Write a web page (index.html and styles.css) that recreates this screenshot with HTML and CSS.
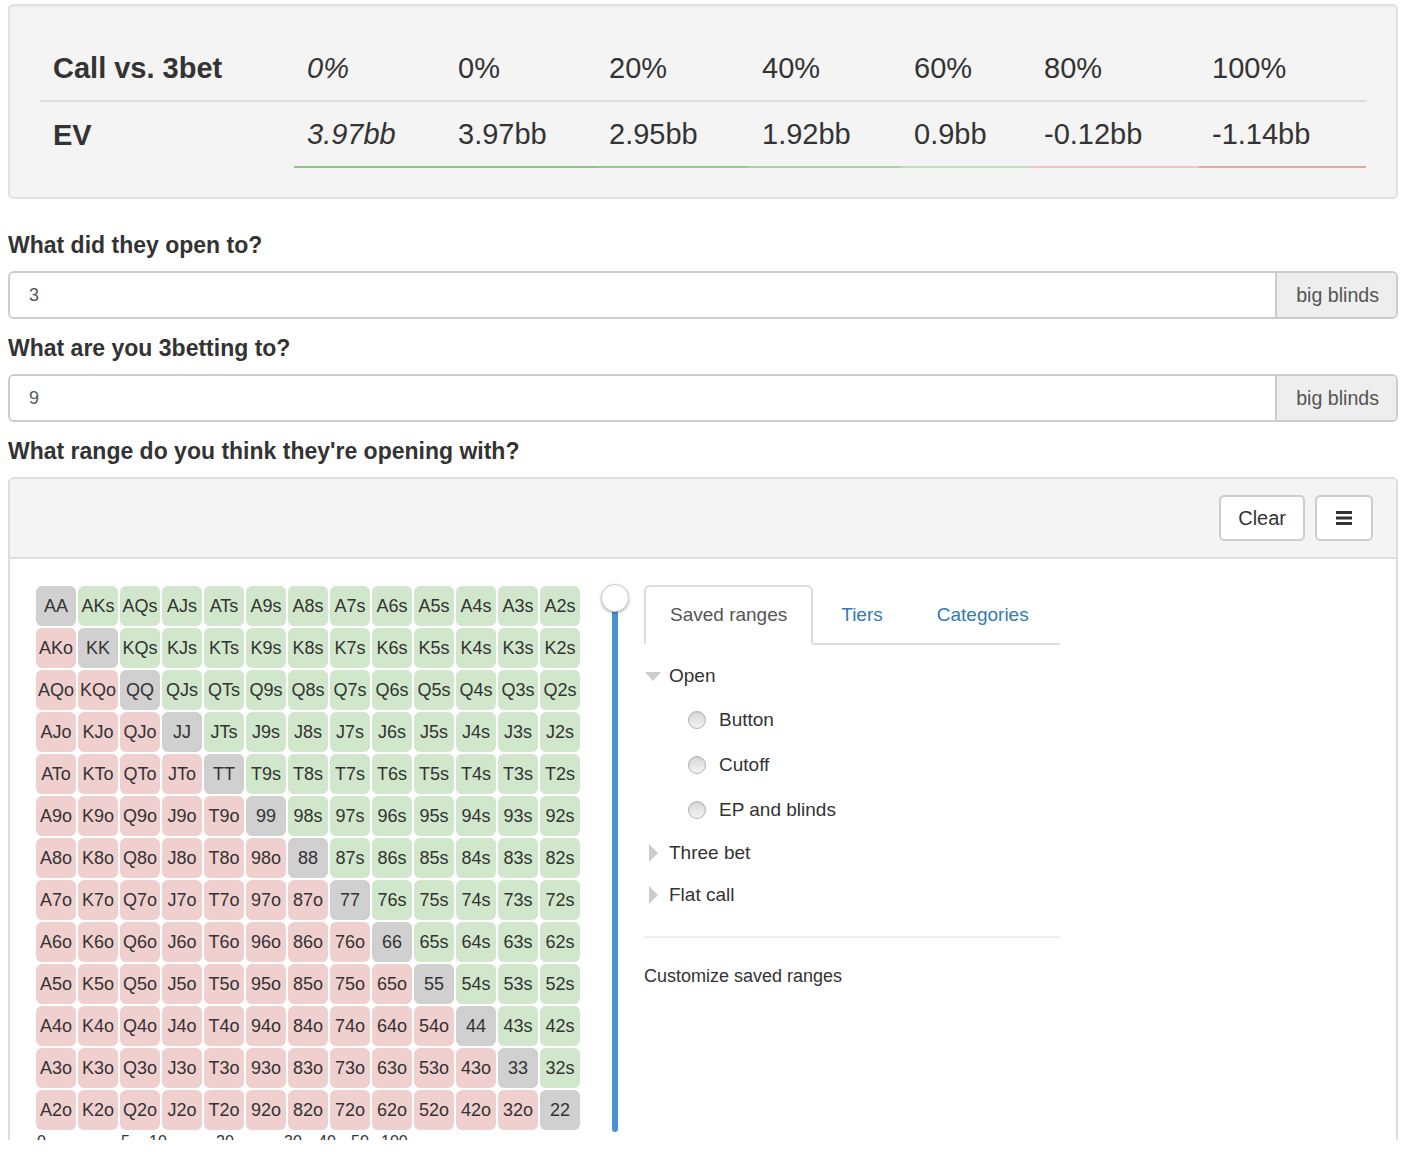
FILE: index.html
```html
<!DOCTYPE html>
<html>
<head>
<meta charset="utf-8">
<title>3bet calculator</title>
<link rel="stylesheet" href="styles.css">
</head>
<body>
<div class="page">
  <div class="well">
    <table class="ev-table">
      <colgroup>
        <col class="col-label"><col class="col-a"><col class="col-b"><col class="col-c"><col class="col-d"><col class="col-e"><col class="col-f"><col class="col-g">
      </colgroup>
      <tr class="head">
        <th>Call vs. 3bet</th>
        <td class="it">0%</td>
        <td>0%</td>
        <td>20%</td>
        <td>40%</td>
        <td>60%</td>
        <td>80%</td>
        <td>100%</td>
      </tr>
      <tr class="ev">
        <th>EV</th>
        <td class="it ev-a">3.97bb</td>
        <td class="ev-a">3.97bb</td>
        <td class="ev-b">2.95bb</td>
        <td class="ev-c">1.92bb</td>
        <td class="ev-d">0.9bb</td>
        <td class="ev-e">-0.12bb</td>
        <td class="ev-f">-1.14bb</td>
      </tr>
    </table>
  </div>

  <label class="q" for="open">What did they open to?</label>
  <div class="input-group">
    <input class="input" id="open" type="text" value="3">
    <span class="addon">big blinds</span>
  </div>

  <label class="q" for="threebet">What are you 3betting to?</label>
  <div class="input-group">
    <input class="input" id="threebet" type="text" value="9">
    <span class="addon">big blinds</span>
  </div>

  <label class="q">What range do you think they're opening with?</label>
  <div class="range-panel">
    <div class="panel-head">
      <button class="btn">Clear</button>
      <button class="btn btn-icon" aria-label="Menu">
        <svg width="16" height="14" viewBox="0 0 16 14"><rect x="0" y="0" width="16" height="3" fill="#333"/><rect x="0" y="5.5" width="16" height="3" fill="#333"/><rect x="0" y="11" width="16" height="3" fill="#333"/></svg>
      </button>
    </div>
    <div class="panel-body">
      <div class="grid-col">
        <div class="grid">
          <div class="c p">AA</div><div class="c s">AKs</div><div class="c s">AQs</div><div class="c s">AJs</div><div class="c s">ATs</div><div class="c s">A9s</div><div class="c s">A8s</div><div class="c s">A7s</div><div class="c s">A6s</div><div class="c s">A5s</div><div class="c s">A4s</div><div class="c s">A3s</div><div class="c s">A2s</div>
          <div class="c o">AKo</div><div class="c p">KK</div><div class="c s">KQs</div><div class="c s">KJs</div><div class="c s">KTs</div><div class="c s">K9s</div><div class="c s">K8s</div><div class="c s">K7s</div><div class="c s">K6s</div><div class="c s">K5s</div><div class="c s">K4s</div><div class="c s">K3s</div><div class="c s">K2s</div>
          <div class="c o">AQo</div><div class="c o">KQo</div><div class="c p">QQ</div><div class="c s">QJs</div><div class="c s">QTs</div><div class="c s">Q9s</div><div class="c s">Q8s</div><div class="c s">Q7s</div><div class="c s">Q6s</div><div class="c s">Q5s</div><div class="c s">Q4s</div><div class="c s">Q3s</div><div class="c s">Q2s</div>
          <div class="c o">AJo</div><div class="c o">KJo</div><div class="c o">QJo</div><div class="c p">JJ</div><div class="c s">JTs</div><div class="c s">J9s</div><div class="c s">J8s</div><div class="c s">J7s</div><div class="c s">J6s</div><div class="c s">J5s</div><div class="c s">J4s</div><div class="c s">J3s</div><div class="c s">J2s</div>
          <div class="c o">ATo</div><div class="c o">KTo</div><div class="c o">QTo</div><div class="c o">JTo</div><div class="c p">TT</div><div class="c s">T9s</div><div class="c s">T8s</div><div class="c s">T7s</div><div class="c s">T6s</div><div class="c s">T5s</div><div class="c s">T4s</div><div class="c s">T3s</div><div class="c s">T2s</div>
          <div class="c o">A9o</div><div class="c o">K9o</div><div class="c o">Q9o</div><div class="c o">J9o</div><div class="c o">T9o</div><div class="c p">99</div><div class="c s">98s</div><div class="c s">97s</div><div class="c s">96s</div><div class="c s">95s</div><div class="c s">94s</div><div class="c s">93s</div><div class="c s">92s</div>
          <div class="c o">A8o</div><div class="c o">K8o</div><div class="c o">Q8o</div><div class="c o">J8o</div><div class="c o">T8o</div><div class="c o">98o</div><div class="c p">88</div><div class="c s">87s</div><div class="c s">86s</div><div class="c s">85s</div><div class="c s">84s</div><div class="c s">83s</div><div class="c s">82s</div>
          <div class="c o">A7o</div><div class="c o">K7o</div><div class="c o">Q7o</div><div class="c o">J7o</div><div class="c o">T7o</div><div class="c o">97o</div><div class="c o">87o</div><div class="c p">77</div><div class="c s">76s</div><div class="c s">75s</div><div class="c s">74s</div><div class="c s">73s</div><div class="c s">72s</div>
          <div class="c o">A6o</div><div class="c o">K6o</div><div class="c o">Q6o</div><div class="c o">J6o</div><div class="c o">T6o</div><div class="c o">96o</div><div class="c o">86o</div><div class="c o">76o</div><div class="c p">66</div><div class="c s">65s</div><div class="c s">64s</div><div class="c s">63s</div><div class="c s">62s</div>
          <div class="c o">A5o</div><div class="c o">K5o</div><div class="c o">Q5o</div><div class="c o">J5o</div><div class="c o">T5o</div><div class="c o">95o</div><div class="c o">85o</div><div class="c o">75o</div><div class="c o">65o</div><div class="c p">55</div><div class="c s">54s</div><div class="c s">53s</div><div class="c s">52s</div>
          <div class="c o">A4o</div><div class="c o">K4o</div><div class="c o">Q4o</div><div class="c o">J4o</div><div class="c o">T4o</div><div class="c o">94o</div><div class="c o">84o</div><div class="c o">74o</div><div class="c o">64o</div><div class="c o">54o</div><div class="c p">44</div><div class="c s">43s</div><div class="c s">42s</div>
          <div class="c o">A3o</div><div class="c o">K3o</div><div class="c o">Q3o</div><div class="c o">J3o</div><div class="c o">T3o</div><div class="c o">93o</div><div class="c o">83o</div><div class="c o">73o</div><div class="c o">63o</div><div class="c o">53o</div><div class="c o">43o</div><div class="c p">33</div><div class="c s">32s</div>
          <div class="c o">A2o</div><div class="c o">K2o</div><div class="c o">Q2o</div><div class="c o">J2o</div><div class="c o">T2o</div><div class="c o">92o</div><div class="c o">82o</div><div class="c o">72o</div><div class="c o">62o</div><div class="c o">52o</div><div class="c o">42o</div><div class="c o">32o</div><div class="c p">22</div>
        </div>
        <div class="axis">
          <span class="tick" style="left:1px">0</span>
          <span class="tick" style="left:85px">5</span>
          <span class="tick" style="left:113px">10</span>
          <span class="tick" style="left:180px">20</span>
          <span class="tick" style="left:248px">30</span>
          <span class="tick" style="left:282px">40</span>
          <span class="tick" style="left:315px">50</span>
          <span class="tick" style="left:345px">100</span>
        </div>
      </div>

      <div class="slider">
        <div class="knob"></div>
        <div class="bar"></div>
      </div>

      <div class="side">
        <ul class="tabs">
          <li class="tab active"><a>Saved ranges</a></li>
          <li class="tab"><a>Tiers</a></li>
          <li class="tab"><a>Categories</a></li>
        </ul>
        <ul class="tree">
          <li>
            <div class="row"><span class="tri-down"></span><span>Open</span></div>
            <ul class="sub">
              <li class="row"><span class="radio"></span><span>Button</span></li>
              <li class="row row-mid"><span class="radio"></span><span>Cutoff</span></li>
              <li class="row"><span class="radio"></span><span>EP and blinds</span></li>
            </ul>
          </li>
          <li class="row row-closed"><span class="tri-right"></span><span>Three bet</span></li>
          <li class="row row-closed"><span class="tri-right"></span><span>Flat call</span></li>
        </ul>
        <div class="sep"></div>
        <div class="customize">Customize saved ranges</div>
      </div>
    </div>
  </div>
</div>
</body>
</html>
```

FILE: styles.css
```css
* { box-sizing: border-box; }

body {
  margin: 4px 0 0 8px;
  font-family: "Liberation Sans", Arial, Helvetica, sans-serif;
  color: #333;
  background: #fff;
}

.page {
  width: 1390px;
  height: 1136px;
  overflow: hidden;
}

/* ---------- EV summary ---------- */
.well {
  background: #f4f4f4;
  border: 2px solid #e2e2e2;
  border-radius: 5px;
  padding: 30px 30px 29px;
  margin-bottom: 30px;
  box-shadow: inset 0 1px 1px rgba(0, 0, 0, 0.05);
}

.ev-table {
  border-collapse: collapse;
  table-layout: fixed;
  width: 1326px;
  font-size: 29px;
}

.col-label { width: 254px; }
.col-a { width: 151px; }
.col-b { width: 151px; }
.col-c { width: 153px; }
.col-d { width: 152px; }
.col-e { width: 130px; }
.col-f { width: 168px; }
.col-g { width: 167px; }

.ev-table th,
.ev-table td {
  padding: 12px 12px 12px 13px;
  line-height: 40px;
  text-align: left;
  vertical-align: middle;
  white-space: nowrap;
}

.ev-table th { font-weight: bold; }
.ev-table td { font-weight: normal; }
.ev-table .it { font-style: italic; }

.head th,
.head td { border-bottom: 2px solid #dcdcdc; }

.ev td { border-bottom: 2px solid transparent; }
.ev .ev-a { border-bottom-color: #8fc387; }
.ev .ev-b { border-bottom-color: #99c991; }
.ev .ev-c { border-bottom-color: #abd4a5; }
.ev .ev-d { border-bottom-color: #c0ddba; }
.ev .ev-e { border-bottom-color: #ebc6c3; }
.ev .ev-f { border-bottom-color: #e3a8a4; }

/* ---------- form ---------- */
.q {
  display: block;
  font-size: 23px;
  font-weight: bold;
  line-height: 32px;
  margin-bottom: 10px;
}

.input-group {
  display: flex;
  height: 48px;
  border: 2px solid #cccccc;
  border-radius: 6px;
  margin-bottom: 13px;
  overflow: hidden;
}

.input {
  flex: 1;
  min-width: 0;
  border: 0;
  outline: none;
  font-family: "Liberation Sans", Arial, sans-serif;
  font-size: 18px;
  color: #555;
  padding: 0 19px;
  background: #fff;
}

.addon {
  display: flex;
  align-items: center;
  background: #eeeeee;
  border-left: 2px solid #cccccc;
  font-size: 19.6px;
  color: #555;
  padding: 0 17px 0 19px;
}

/* ---------- range panel ---------- */
.range-panel {
  border: 2px solid #dddddd;
  border-radius: 6px;
  height: 700px;
}

.panel-head {
  display: flex;
  justify-content: flex-end;
  gap: 10px;
  background: #f4f4f4;
  border-bottom: 2px solid #dddddd;
  padding: 16px 23px;
  border-radius: 4px 4px 0 0;
}

.btn {
  height: 46px;
  border: 2px solid #cccccc;
  border-radius: 5px;
  background: #fff;
  font-family: "Liberation Sans", Arial, sans-serif;
  font-size: 20px;
  color: #333;
  padding: 0 17px;
  display: flex;
  align-items: center;
}

.btn-icon { padding: 0 19px; }

.panel-body {
  display: flex;
  align-items: flex-start;
  padding: 27px 0 0 26px;
}

.grid {
  display: grid;
  grid-template-columns: repeat(13, 40px);
  grid-auto-rows: 40px;
  gap: 2px;
}

.c {
  display: flex;
  align-items: center;
  justify-content: center;
  border-radius: 6px;
  font-size: 18px;
  white-space: nowrap;
  color: #333;
}

.c.p { background: #d0d0d0; }
.c.s { background: #d0e7cb; }
.c.o { background: #f0cfcf; }

.axis {
  position: relative;
  height: 20px;
  margin-top: 3px;
}

.tick {
  position: absolute;
  top: 0;
  font-size: 16px;
  line-height: 18px;
  color: #333;
}

.slider {
  width: 28px;
  margin-left: 21px;
  margin-top: -2px;
  display: flex;
  flex-direction: column;
  align-items: center;
}

.knob {
  position: relative;
  z-index: 1;
  width: 28px;
  height: 28px;
  border-radius: 50%;
  background: #fff;
  border: 1px solid #cfcfcf;
  box-shadow: 0 1px 3px rgba(0, 0, 0, 0.3);
}

.bar {
  width: 6px;
  height: 534px;
  margin-top: -14px;
  background: #4a90d9;
  border-radius: 0 0 3px 3px;
}

.side {
  width: 416px;
  margin-left: 15px;
  margin-top: -1px;
}

.tabs {
  list-style: none;
  margin: 0;
  padding: 0;
  display: flex;
  border-bottom: 2px solid #dddddd;
}

.tab {
  margin-right: 2px;
  margin-bottom: -2px;
}

.tab a {
  display: block;
  padding: 17px 24px;
  line-height: 22px;
  font-size: 19px;
  color: #337ab7;
  border: 2px solid transparent;
  border-radius: 6px 6px 0 0;
}

.tab.active a {
  color: #555;
  background: #fff;
  border-color: #dddddd #dddddd transparent;
}

.tree,
.sub {
  list-style: none;
  margin: 0;
  padding: 0;
}

.tree { margin-top: 9px; }

.row {
  display: flex;
  align-items: center;
  height: 44px;
  font-size: 19px;
  color: #333;
}

.row-mid { height: 46px; }
.row-closed { height: 42px; }

.tri-down {
  width: 0;
  height: 0;
  margin-left: 1px;
  margin-right: 8px;
  border-left: 8px solid transparent;
  border-right: 8px solid transparent;
  border-top: 9px solid #cccccc;
}

.tri-right {
  width: 0;
  height: 0;
  margin-left: 5px;
  margin-right: 11px;
  border-top: 9px solid transparent;
  border-bottom: 9px solid transparent;
  border-left: 9px solid #cccccc;
}

.radio {
  width: 18px;
  height: 18px;
  margin-left: 44px;
  margin-right: 13px;
  border-radius: 50%;
  border: 1px solid #b3b3b3;
  background: linear-gradient(#d8d8d8, #f3f3f3);
  box-shadow: inset 0 1px 1px rgba(0, 0, 0, 0.08);
}

.sep {
  height: 2px;
  background: #eeeeee;
  margin-top: 20px;
}

.customize {
  margin-top: 25px;
  font-size: 18px;
  line-height: 26px;
  color: #333;
}
```
